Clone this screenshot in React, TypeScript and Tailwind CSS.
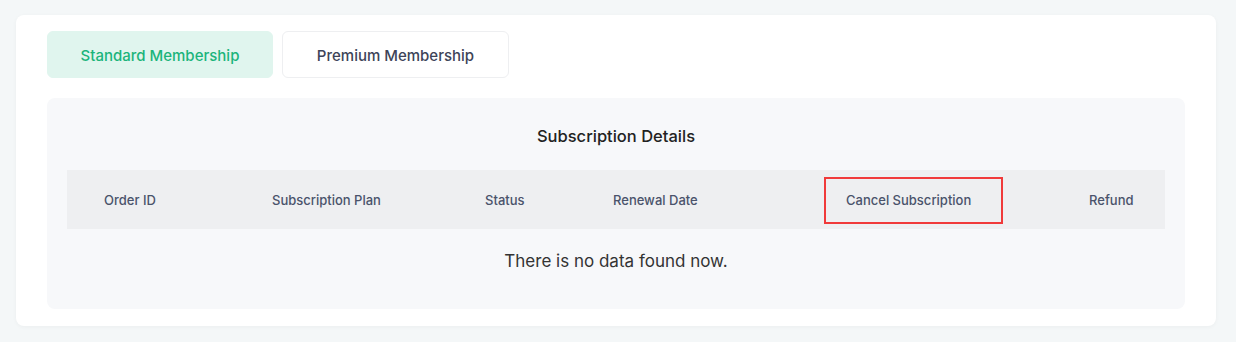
import { useState } from "react";

const columns = [
  { label: "Order ID" },
  { label: "Subscription Plan" },
  { label: "Status" },
  { label: "Renewal Date" },
  { label: "Cancel Subscription", highlight: true },
  { label: "Refund" },
];

export default function App() {
  const [tab, setTab] = useState<"standard" | "premium">("standard");

  return (
    <div className="min-h-[342px] bg-[#f4f7f8] pl-4 pr-5 pt-[15px] pb-4 font-['Inter',sans-serif]">
      <div className="rounded-lg bg-white px-[31px] pt-4 pb-[17px] shadow-[0_1px_4px_rgba(0,0,0,0.04)]">
        <div className="flex gap-[9px]">
          <button
            onClick={() => setTab("standard")}
            className={`h-[47px] w-[226px] rounded-md border pt-[3px] text-[15px] font-medium ${
              tab === "standard"
                ? "border-[#e0f5ee] bg-[#e0f5ee] text-[#1bb47b]"
                : "border-[#eeeff1] bg-white text-[#3d4458]"
            }`}
          >
            Standard Membership
          </button>
          <button
            onClick={() => setTab("premium")}
            className={`h-[47px] w-[227px] rounded-md border pt-[3px] text-[15px] font-medium ${
              tab === "premium"
                ? "border-[#e0f5ee] bg-[#e0f5ee] text-[#1bb47b]"
                : "border-[#eeeff1] bg-white text-[#3d4458]"
            }`}
          >
            Premium Membership
          </button>
        </div>

        <div className="mt-5 rounded-lg bg-[#f7f8fa] px-5 pt-[24px] pb-[36px]">
          <h2 className="text-center text-[16.5px] font-medium leading-[28px] text-[#222]">Subscription Details</h2>

          <div className="mt-[20px] grid h-[59px] grid-cols-[168px_213px_128px_233px_243px_1fr] items-center bg-[#eeeff1] pt-[2px] text-[13px] font-medium text-[#4a536b]">
            {columns.map((c) =>
              c.highlight ? (
                <div key={c.label} className="flex items-center">
                  <span className="ml-[15px] flex h-[47px] w-[179px] items-center border-2 border-[#f03a3a] pl-[20px]">
                    {c.label}
                  </span>
                </div>
              ) : (
                <div key={c.label} className="pl-[37px]">
                  {c.label}
                </div>
              )
            )}
          </div>

          <p className="mt-[20px] text-center text-[17px] leading-[24px] text-[#333]">There is no data found now.</p>
        </div>
      </div>
    </div>
  );
}
